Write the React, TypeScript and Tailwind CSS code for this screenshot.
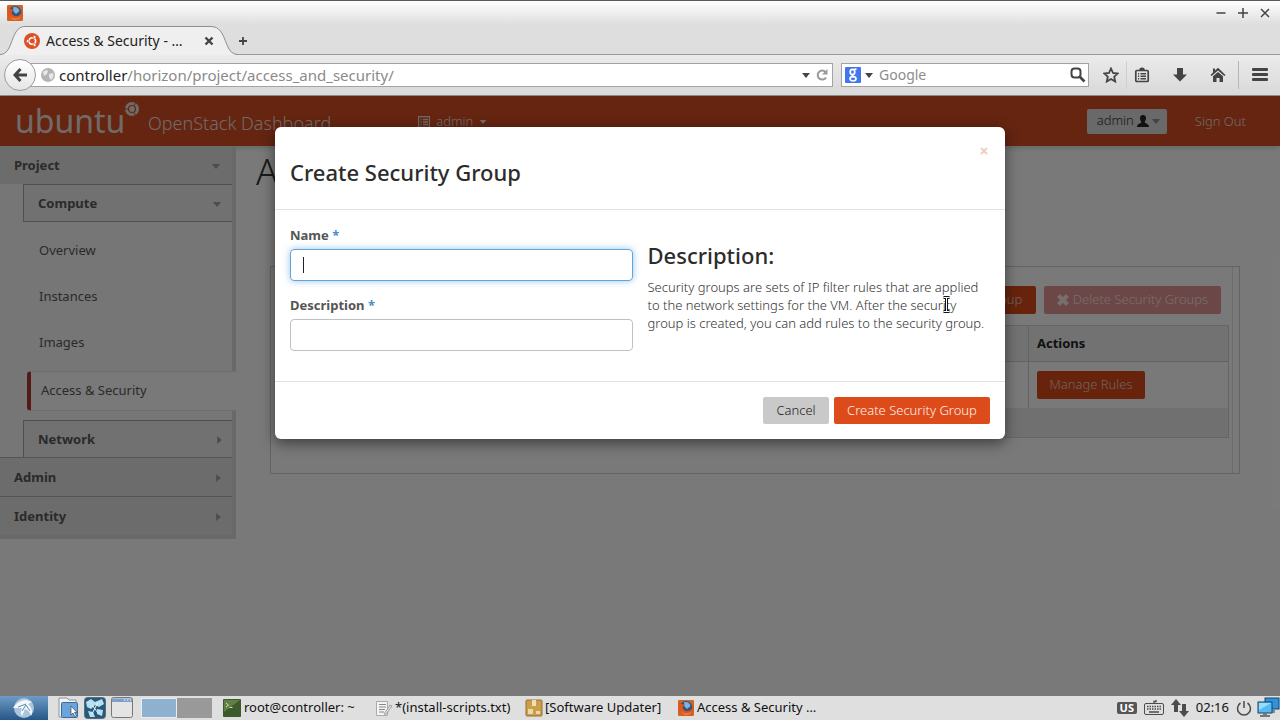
import type { ReactNode } from "react";

const Caret = ({ className }: { className: string }) => (
  <svg viewBox="0 0 10 6" className={className} fill="currentColor" aria-hidden="true">
    <path d="M0 0h10L5 6z" />
  </svg>
);

const CaretRight = () => (
  <svg viewBox="0 0 6 10" className="h-2 w-[5px] text-[#9a9a9a]" fill="currentColor" aria-hidden="true">
    <path d="M0 0v10L6 5z" />
  </svg>
);

const FirefoxIcon = () => (
  <svg viewBox="0 0 18 18" className="size-[18px] shrink-0" aria-hidden="true">
    <rect x="1" y="1" width="16" height="16" rx="1" fill="#c9672f" />
    <circle cx="9" cy="8.5" r="6.5" fill="#31557c" />
    <path d="M7 3.5c3-1.5 6 .5 6.5 3.5L10 10 7.5 7.500z" fill="#7fb3d8" />
    <path d="M1.500 2.500 4.500 5l3 .5L5.500 8c.5 3.500 4 5.500 7.500 3.500 2.500-1.500 3-4 2.500-7C18 9 17 16 10 17 4 17.500.5 13 1.500 2.500z" fill="#e0561c" />
    <path d="M3 11c2 4 8 5 12 1-2 5-9 6-12-1z" fill="#e98a3c" />
  </svg>
);

const UbuntuIcon = () => (
  <svg viewBox="0 0 16 16" className="size-4 shrink-0" aria-hidden="true">
    <circle cx="8" cy="8" r="8" fill="#dd4f26" />
    <circle cx="8.300" cy="8" r="3.300" fill="none" stroke="#fff" strokeWidth="1.600" />
    <g fill="#fff" stroke="#dd4f26" strokeWidth=".7">
      <circle cx="3.700" cy="8" r="1.500" />
      <circle cx="10.500" cy="4" r="1.500" />
      <circle cx="10.500" cy="12" r="1.500" />
    </g>
  </svg>
);

const IconButton = ({ label, className = "", children }: { label: string; className?: string; children: ReactNode }) => (
  <button type="button" aria-label={label} className={`flex shrink-0 items-center justify-center text-[#444] ${className}`}>
    {children}
  </button>
);

const TitleBar = () => (
  <div className="flex h-6 items-center justify-between border-t border-[#5c5a5e] bg-linear-to-b from-white to-[#dfdfdf] pr-2.5 pl-1.5">
    <FirefoxIcon />
    <div className="flex gap-3">
      <IconButton label="Minimize">
        <svg viewBox="0 0 10 10" className="size-2.5" stroke="currentColor" strokeWidth="1.500"><path d="M.5 5h9" /></svg>
      </IconButton>
      <IconButton label="Maximize">
        <svg viewBox="0 0 10 10" className="size-2.5" stroke="currentColor" strokeWidth="1.500"><path d="M0 5h10M5 0v10" /></svg>
      </IconButton>
      <IconButton label="Close">
        <svg viewBox="0 0 10 10" className="size-2.5" stroke="currentColor" strokeWidth="1.500"><path d="m1 1 8 8M9 1 1 9" /></svg>
      </IconButton>
    </div>
  </div>
);

const TabStrip = () => (
  <div className="flex h-[31px] items-stretch border-b border-[#9b9b9b] bg-[#dedede]">
    <div className="relative -mb-px flex w-[238px] items-center pr-6 pl-6">
      <svg viewBox="0 0 238 31" className="absolute inset-0 h-[31px] w-[238px]" aria-hidden="true">
        <path d="M0 30.500C14 30.500 10 2.500 25 2.500H211C228 2.500 223 30.500 237 30.500V31H0z" fill="#efefef" />
        <path d="M0 30.500C14 30.500 10 2.500 25 2.500H211C228 2.500 223 30.500 238 30.500" fill="none" stroke="#8f8f8f" />
      </svg>
      <div className="relative flex flex-1 items-center gap-1.5 pt-0.5">
        <UbuntuIcon />
        <span className="flex-1 whitespace-nowrap text-sm text-[#222]">Access &amp; Security - …</span>
        <IconButton label="Close tab">
          <svg viewBox="0 0 10 10" className="size-2.5" stroke="currentColor" strokeWidth="2.400"><path d="m1.500 1.500 7 7M8.500 1.500l-7 7" /></svg>
        </IconButton>
      </div>
    </div>
    <IconButton label="New tab" className="pt-1">
      <svg viewBox="0 0 10 10" className="size-2.5" stroke="currentColor" strokeWidth="1.800"><path d="M1 5h8M5 1v8" /></svg>
    </IconButton>
  </div>
);

const Toolbar = () => (
  <div className="flex h-[41px] items-center border-b border-[#8c8c8c] bg-linear-to-b from-[#ebebeb] to-[#d9d9d9] pr-3 pl-1">
    <IconButton label="Back" className="z-10 size-8 rounded-full border border-[#9c9c9c] bg-linear-to-b from-white to-[#e6e6e6]">
      <svg viewBox="0 0 14 14" className="size-3.5" fill="none" stroke="currentColor" strokeWidth="3"><path d="M7.500 1 2 7l5.500 6M2.500 7H14" /></svg>
    </IconButton>
    <div className="-ml-2 flex h-6 flex-1 items-center border border-[#a3a3a3] bg-white pr-1 pl-3">
      <svg viewBox="0 0 14 14" className="size-3.5" aria-hidden="true">
        <circle cx="7" cy="7" r="7" fill="#b4b4b4" />
        <path d="M2 4c2-2 4-2 5-1L6 6 3 8zM8 6l4-1c1 3 0 5-2 7L8 9z" fill="#e8e8e8" />
      </svg>
      <span className="ml-1 flex-1 text-[15px] leading-5 text-[#8a8a8a]">
        <span className="text-[#222]">controller</span>/horizon/project/access_and_security/
      </span>
      <Caret className="mr-1.5 h-[5px] w-2 text-[#444]" />
      <IconButton label="Reload">
        <svg viewBox="0 0 12 12" className="size-3 text-[#999]" fill="none" stroke="currentColor" strokeWidth="2"><path d="M9.500 3A4.500 4.500 0 1 0 10 8.500" /><path d="M11.500 0v5.500H6z" fill="currentColor" stroke="none" /></svg>
      </IconButton>
    </div>
    <div className="ml-2 flex h-6 w-[248px] items-center border border-[#a3a3a3] bg-white pr-0.5 pl-[3px]">
      <svg viewBox="0 0 16 16" className="size-4 shrink-0" aria-hidden="true">
        <rect width="16" height="16" rx="1" fill="#4376ec" />
        <g fill="none" stroke="#fff" strokeWidth="1.700">
          <ellipse cx="7.500" cy="5" rx="2.300" ry="2.600" />
          <path d="M9.500 2.200h2M8 7.500c-1.500 1-.5 1.700.8 2.500" />
          <ellipse cx="8" cy="11.800" rx="3" ry="2.200" />
        </g>
      </svg>
      <Caret className="ml-1 h-[5px] w-2 shrink-0 text-[#444]" />
      <input aria-label="Search" placeholder="Google" className="ml-1.5 w-full min-w-0 text-sm outline-none placeholder:text-[#8d8d8d]" />
      <IconButton label="Go">
        <svg viewBox="0 0 16 16" className="size-4" fill="none" stroke="currentColor" strokeWidth="2"><rect x="1.500" y="1.500" width="9" height="9" rx="3" /><path d="m10 10 4.500 4.500" strokeWidth="2.600" /></svg>
      </IconButton>
    </div>
    <IconButton label="Bookmark" className="ml-3.5 w-4">
      <svg viewBox="0 0 16 16" className="size-4" fill="none" stroke="currentColor" strokeWidth="1.800"><path d="m8 1.500 2 4.500 4.700.5-3.500 3.200 1 4.800L8 12l-4.200 2.500 1-4.800L1.300 6.500 6 6z" /></svg>
    </IconButton>
    <div className="ml-[7px] h-7 w-px bg-[#cfcfcf]" />
    <IconButton label="Bookmarks menu" className="ml-[7px] w-4">
      <svg viewBox="0 0 16 16" className="size-4" fill="none" stroke="currentColor" strokeWidth="1.700"><rect x="1.800" y="3.500" width="12.400" height="11" rx="1" /><path d="M6 3.500c0-3 4-3 4 0" fill="currentColor" /><path d="M4 6.700h1.200M6.500 6.700h5.500M4 9.200h1.200M6.500 9.200h5.500M4 11.700h1.200M6.500 11.700h5.500" strokeWidth="1.500" /></svg>
    </IconButton>
    <IconButton label="Downloads" className="ml-[22px] w-4">
      <svg viewBox="0 0 16 16" className="size-4" fill="currentColor"><path d="M5 1h6v6.500h4l-7 7-7-7h4z" /></svg>
    </IconButton>
    <IconButton label="Home" className="ml-[22px] w-4">
      <svg viewBox="0 0 16 16" className="size-4" fill="currentColor"><path d="M8 .8 5 3.500V1.500H3v4L.5 8l1.200 1L8 3.500 14.300 9l1.200-1z" /><path d="M8 5 3 9.300V15h3.500v-4h3v4H13V9.300z" /></svg>
    </IconButton>
    <div className="ml-3 h-7 w-px bg-[#b5b5b5]" />
    <IconButton label="Menu" className="ml-[13px] w-4">
      <svg viewBox="0 0 16 14" className="h-3.5 w-4" fill="currentColor"><rect y="0" width="16" height="3" rx="1" /><rect y="5" width="16" height="3" rx="1" /><rect y="10" width="16" height="3" rx="1" /></svg>
    </IconButton>
  </div>
);

const SiteHeader = () => (
  <header className="flex h-[50px] items-center bg-[#ca4b22] pr-[34px] pl-[15px] text-[#e0d6d2] shadow-md">
    <div className="flex w-[133px] items-start">
      <span className="text-[32px] leading-10">ubuntu</span>
      <svg viewBox="0 0 14 14" className="mt-px size-3.5 shrink-0" aria-hidden="true">
        <circle cx="7" cy="7" r="7" fill="currentColor" />
        <circle cx="7" cy="7" r="3.500" fill="none" stroke="#ca4b22" strokeWidth="1.200" />
        <path d="M0 7h3.500M9 3.500l1.700-3M9 10.500l1.700 3" stroke="#ca4b22" />
      </svg>
    </div>
    <span className="mt-1 text-lg font-light whitespace-nowrap">OpenStack Dashboard</span>
    <button type="button" className="ml-[87px] flex items-center gap-1.5 pt-0.5 text-[13px] font-light">
      <svg viewBox="0 0 12 12" className="size-3" fill="none" stroke="currentColor" aria-hidden="true"><path d="M.5.500h11v11H.5zM2.500 3.500h1M5 3.500h5M2.500 6h1M5 6h5M2.500 8.500h1M5 8.500h5" strokeWidth="1.300" /></svg>
      admin
      <Caret className="h-1 w-2" />
    </button>
    <button type="button" className="ml-auto flex h-[25px] w-20 items-center justify-center gap-0.5 rounded-xs bg-[#d2d2d2] pl-1 text-[13px] font-light text-[#333]">
      admin
      <svg viewBox="0 0 12 12" className="ml-px size-3 text-[#222]" fill="currentColor" aria-hidden="true"><path d="M6 0c2 0 3 1.300 3 3S8.300 6 7.700 7c0 1.500 4.300 1.500 4.300 5H0c0-3.500 4.300-3.500 4.300-5C3.700 6 3 4.700 3 3s1-3 3-3z" /></svg>
      <Caret className="h-[5px] w-2.5 text-[#8a8a8a]" />
    </button>
    <a href="#signout" className="ml-7 pt-0.5 text-[13px] font-light">Sign Out</a>
  </header>
);

const Sidebar = () => (
  <nav className="w-[236px] shrink-0 self-start border-b-4 border-[#d3d3d3] bg-[#ededed] text-[13px] text-[#555]">
    <div className="border-r-4 border-[#d3d3d3]">
      <button type="button" className="flex h-[38px] w-full items-center justify-between bg-[#d9d9d9] pt-0.5 pr-[11px] pl-3.5 font-bold">
        Project <Caret className="h-[5px] w-2.5 text-[#9a9a9a]" />
      </button>
      <button type="button" className="ml-[23px] flex h-[38px] w-[209px] items-center justify-between border-y border-l border-[#a0a0a0] bg-[#e2e2e2] pt-0.5 pr-2.5 pl-3.5 font-bold">
        Compute <Caret className="h-[5px] w-2.5 text-[#9a9a9a]" />
      </button>
      <ul className="pt-1.5 pb-[5px]">
        {["Overview", "Instances", "Images"].map((item) => (
          <li key={item}>
            <a href="#panel" className="flex h-[46px] items-center pl-[39px]">{item}</a>
          </li>
        ))}
      </ul>
    </div>
    <a href="#access" className="ml-[27px] flex h-10 items-center rounded-l-sm border-y border-l-4 border-y-[#dcdcdc] border-l-[#a8342e] bg-[#f3f3f3] pl-2.5">
      Access &amp; Security
    </a>
    <div className="border-r-4 border-[#d3d3d3] pt-[9px] font-bold">
      <button type="button" className="ml-[23px] flex h-[37px] w-[209px] items-center justify-between border-t border-l border-[#a0a0a0] bg-[#e2e2e2] pt-0.5 pr-2.5 pl-3.5">
        Network <CaretRight />
      </button>
      <button type="button" className="flex h-[39px] w-full items-center justify-between border-t border-[#a8a8a8] bg-[#d8d8d8] pt-0.5 pr-[11px] pl-3.5">
        Admin <CaretRight />
      </button>
      <button type="button" className="flex h-[39px] w-full items-center justify-between border-t border-[#a8a8a8] bg-[#d8d8d8] pt-0.5 pr-[11px] pl-3.5">
        Identity <CaretRight />
      </button>
    </div>
  </nav>
);

const SecurityGroups = () => (
  <section className="flex-1 pr-10">
    <h1 className="ml-5 h-[120px] text-4xl leading-[52px] font-light text-[#333]">Access &amp; Security</h1>
    <div className="ml-[34px] border border-[#c6c6c6] pr-1.5">
      <div className="border-r border-[#dadada] pr-[3px] pb-[35px] pl-2.5">
        <div className="flex h-[58px] items-center justify-end gap-2 pt-2 pr-2 text-[13px] font-light">
          <button type="button" className="h-7 w-[168px] rounded-xs bg-[#cf4719] text-[#dcc9c0]">+ Create Security Group</button>
          <button type="button" className="flex h-7 w-[177px] items-center justify-center gap-1 rounded-xs bg-[#d98f8f] whitespace-nowrap text-[#f0dcdc]">
            <svg viewBox="0 0 12 12" className="size-3" stroke="currentColor" strokeWidth="4" aria-hidden="true"><path d="m1.500 1.500 9 9M10.500 1.500l-9 9" /></svg>
            Delete Security Groups
          </button>
        </div>
        <table className="w-full border border-[#cacaca] text-left text-[13px]">
          <thead>
            <tr className="h-9 border-b border-[#c6c6c6] bg-[#e4e4e4] text-[#222]">
              <th className="px-2">Name</th>
              <th className="w-[200px] border-l border-[#c6c6c6] px-2">Actions</th>
            </tr>
          </thead>
          <tbody>
            <tr className="h-[46px]">
              <td className="px-2">default</td>
              <td className="border-l border-[#c6c6c6] px-2">
                <button type="button" className="h-7 w-[108px] rounded-xs bg-[#cf4719] font-light text-[#dcc9c0]">Manage Rules</button>
              </td>
            </tr>
          </tbody>
          <tfoot>
            <tr className="h-[30px] bg-[#e0e0e0]">
              <td colSpan={2} className="px-2">Displaying 1 item</td>
            </tr>
          </tfoot>
        </table>
      </div>
    </div>
  </section>
);

const Field = ({ id, label, focused = false }: { id: string; label: string; focused?: boolean }) => (
  <div>
    <label htmlFor={id} className="mb-1 block h-5 text-[13px] leading-5 font-bold text-[#555]">
      {label} <span className="text-[#4a8fc4]">*</span>
    </label>
    <div className="relative">
      <input
        id={id}
        type="text"
        className={`h-8 w-full rounded-sm border px-3 text-[13px] caret-transparent outline-none ${
          focused ? "border-[#66a3d9] shadow-[0_0_7px_rgba(102,175,233,0.7)]" : "border-[#c0c0c0]"
        }`}
      />
      {focused && <span className="absolute top-2 left-[13px] h-4 w-px bg-[#222]" />}
    </div>
  </div>
);

const CreateGroupDialog = () => (
  <form role="dialog" aria-labelledby="dialog-title" className="w-[730px] self-start rounded-md bg-white shadow-[0_4px_14px_rgba(0,0,0,0.5)]">
    <div className="flex h-[83px] items-start justify-between border-b border-[#e2e2e2] px-[15px]">
      <h3 id="dialog-title" className="pt-[29px] text-[22px] leading-8 font-medium text-[#2c2c2c]">Create Security Group</h3>
      <button type="button" aria-label="Close" className="mt-5 mr-0.5 text-[#eed0c0]">
        <svg viewBox="0 0 8 8" className="size-2" stroke="currentColor" strokeWidth="2"><path d="m1 1 6 6M7 1 1 7" /></svg>
      </button>
    </div>
    <div className="grid grid-cols-2 gap-[15px] px-[15px] pt-[15px] pb-[30px]">
      <div className="flex flex-col gap-3.5">
        <Field id="group-name" label="Name" focused />
        <Field id="group-description" label="Description" />
      </div>
      <div className="pt-[15px]">
        <h3 className="mb-2 text-[22px] leading-[30px] font-medium text-[#2c2c2c]">Description:</h3>
        <p className="text-[13px] leading-[18px] font-light text-[#333]">
          Security groups are sets of IP filter rules that are applied to the network settings for the VM. After the security
          group is created, you can add rules to the security group.
        </p>
      </div>
    </div>
    <div className="flex justify-end gap-[5px] border-t border-[#e2e2e2] p-[15px] text-[13px] font-light">
      <button type="button" className="h-[27px] w-[66px] rounded-xs bg-[#c9c9c9] text-[#222]">Cancel</button>
      <button type="submit" className="h-[27px] w-[156px] rounded-xs bg-[#dd4b1a] whitespace-nowrap text-[#fff0e8]">Create Security Group</button>
    </div>
  </form>
);

const MousePointer = () => (
  <svg viewBox="0 0 9 17" className="absolute top-[200px] left-[calc(50%+302px)] h-[17px] w-[9px]" fill="none" aria-hidden="true">
    <path d="M1.500 1.500h6M1.500 15.500h6M4.500 1.500v14" stroke="#111" strokeWidth="3" />
    <path d="M1.500 1.500h6M1.500 15.500h6M4.500 1.500v14" stroke="#fff" />
  </svg>
);

const Taskbar = () => (
  <footer className="flex h-6 items-center bg-[#dfdfdf] text-[13px] whitespace-nowrap text-[#111]">
    <button type="button" aria-label="Start menu" className="flex h-6 w-12 shrink-0 items-center justify-center bg-linear-to-b from-[#6f9cc6] to-[#265787]">
      <svg viewBox="0 0 24 22" className="h-[22px] w-6" aria-hidden="true">
        <circle cx="12" cy="11" r="10" fill="#a9c6df" />
        <path d="M1 11c3-5 8-8 13-8l6 2-4 2c4 4 5 8 3 12-1-4-3-6-6-7l-3 7c-2-3-1-6 0-8-3 0-6 0-9 0z" fill="#f4f8fb" />
        <path d="m6 10 8-3M10 14l4-6 4 6" stroke="#5f86aa" fill="none" />
      </svg>
    </button>
    <div className="ml-[9px] flex gap-[5px]">
      <svg viewBox="0 0 22 22" className="size-[22px]" aria-hidden="true">
        <path d="M2 1h8l2 2h7v17H2z" fill="#f0f2f5" stroke="#8b97a5" />
        <rect x="4.500" y="5.500" width="16" height="15" rx="1" fill="#69a5dc" stroke="#3c6a9a" />
        <path d="M14 9v9l2-2 2 4 1.500-1-2-3.500H20z" fill="#fff" stroke="#333" strokeWidth=".6" />
      </svg>
      <svg viewBox="0 0 22 22" className="size-[22px]" aria-hidden="true">
        <rect x=".5" y=".5" width="21" height="21" rx="3" fill="#255a7c" stroke="#5c6d78" />
        <path d="M2 5l5-3 4 3 7-3 2 5-5 3-4-2-4 4-4-2zM4 14l5 1 2 5H6zM13 12l6 1-1 6-5-2z" fill="#b8dff0" />
        <path d="m8 8 6 8M14 5 8 17" stroke="#e8f6fb" />
      </svg>
      <svg viewBox="0 0 22 22" className="size-[22px]" aria-hidden="true">
        <rect x=".5" y=".5" width="21" height="20" rx="2" fill="#e4e4e4" stroke="#777" />
        <path d="M1 1.500h20V5H1z" fill="#7f9fca" />
        <path d="M13 3h1.500M16 3h1.500M19 3h1" stroke="#fff" />
      </svg>
    </div>
    <div className="ml-2 flex h-5 w-[71px] shrink-0">
      <button type="button" aria-label="Desktop 1" className="w-9 border border-[#e8eef3] bg-[#8fb1d0]" />
      <button type="button" aria-label="Desktop 2" className="flex-1 bg-[#999]" />
    </div>
    <button type="button" className="ml-[11px] flex w-[152px] items-center gap-[3px]">
      <svg viewBox="0 0 18 18" className="size-[18px] shrink-0" aria-hidden="true"><rect width="18" height="18" rx="1" fill="#3d5a2c" /><path d="M1 1h16L1 13z" fill="#5f7f45" /><path d="m3 4 2.500 2L3 8M6.500 8.500h3" stroke="#cfe3b8" fill="none" /></svg>
      root@controller: ~
    </button>
    <button type="button" className="flex w-[150px] items-center gap-0.5">
      <svg viewBox="0 0 18 18" className="size-[18px] shrink-0" aria-hidden="true"><path d="M1.500 2.500h11v14h-11z" fill="#f4f4f4" stroke="#aaa" /><path d="M4 5.500h7M4 8h7M4 10.500h6M4 13h5" stroke="#888" /><path d="m9 15 6-9 2 1-6 8.500z" fill="#ddd" stroke="#888" strokeWidth=".7" /></svg>
      *(install-scripts.txt)
    </button>
    <button type="button" className="flex w-[152px] items-center gap-0.5">
      <svg viewBox="0 0 18 18" className="size-[18px] shrink-0" aria-hidden="true"><rect x="1" y="1" width="16" height="16" rx="1" fill="#cc9d4b" stroke="#94702f" /><path d="M7 1h4v6H7z" fill="#f0e0b0" /><path d="M3 10h5v5H3zM11 12h4v3h-4z" fill="#ecd9a8" /></svg>
      [Software Updater]
    </button>
    <button type="button" className="flex items-center gap-0.5">
      <FirefoxIcon />
      Access &amp; Security …
    </button>
    <div className="ml-auto flex items-center gap-[7px] text-[#4c4c4c]">
      <span className="flex h-3 w-5 items-center justify-center rounded-xs bg-[#555] text-[11px] font-bold text-white">US</span>
      <svg viewBox="0 0 20 16" className="h-4 w-5" fill="none" stroke="currentColor" aria-hidden="true"><rect x=".5" y="3.500" width="19" height="11" rx="1.500" /><path d="M3 6.500h14M3 9h14" strokeDasharray="1.500 1" strokeWidth="1.500" /><path d="M5 12h10M10 3.500V1.500H12V0" strokeWidth="1.300" /></svg>
      <svg viewBox="0 0 18 18" className="size-[18px]" fill="currentColor" aria-hidden="true"><path d="M5 0l5 6H7v7H3V6H0zM11 5h4v7h3l-5 6-5-6h3z" /></svg>
      <time className="text-[#111]">02:16</time>
      <svg viewBox="0 0 16 16" className="size-4" fill="none" stroke="currentColor" strokeWidth="1.500" aria-hidden="true"><path d="M8 1v7M4.500 3a6.500 6.500 0 1 0 7 0" /></svg>
      <svg viewBox="0 0 23 22" className="-ml-0.5 h-[22px] w-[23px]" aria-hidden="true"><rect x="8" y="1" width="14" height="11" fill="#2e93df" stroke="#184468" /><path d="M14 12h4v4h-4z" fill="#888" /><rect x="1" y="5" width="14" height="11" fill="#55baf2" stroke="#184468" /><path d="M2 6h12L2 13z" fill="#9cdcfb" /><path d="M6 16h4v2h3v2H3v-2h3z" fill="#777" /></svg>
    </div>
  </footer>
);

export default function App() {
  return (
    <div className="flex h-screen flex-col overflow-hidden font-['Noto_Sans',sans-serif]">
      <TitleBar />
      <TabStrip />
      <Toolbar />
      <main className="relative flex-1 bg-[#f3f3f3]">
        <SiteHeader />
        <div className="flex">
          <Sidebar />
          <SecurityGroups />
        </div>
        {/* Modal backdrop */}
        <div className="absolute inset-0 flex justify-center bg-black/50 pt-[31px]">
          <CreateGroupDialog />
          <MousePointer />
        </div>
      </main>
      <Taskbar />
    </div>
  );
}
